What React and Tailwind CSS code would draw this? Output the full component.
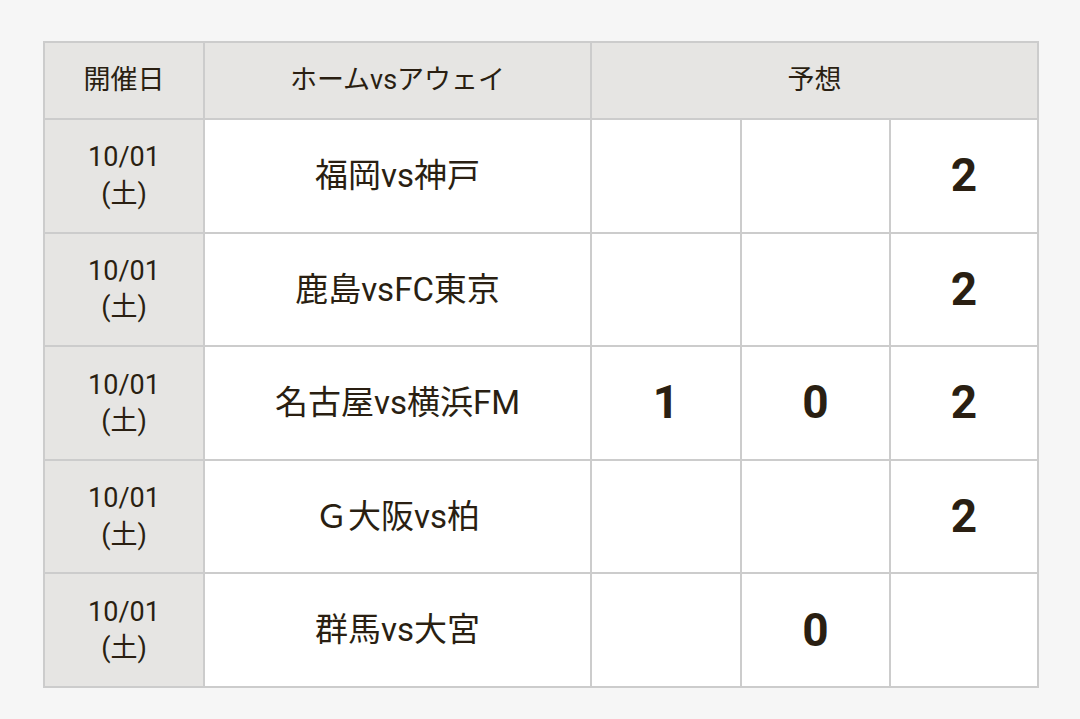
import React from 'react';

const rows = [
    { date: '10/01', day: '(土)', match: '福岡vs神戸', picks: ['', '', '2'] },
    { date: '10/01', day: '(土)', match: '鹿島vsFC東京', picks: ['', '', '2'] },
    { date: '10/01', day: '(土)', match: '名古屋vs横浜FM', picks: ['1', '0', '2'] },
    { date: '10/01', day: '(土)', match: 'Ｇ大阪vs柏', picks: ['', '', '2'] },
    { date: '10/01', day: '(土)', match: '群馬vs大宮', picks: ['', '0', ''] },
];

const App = () => {
    return (
        <div
            className="min-h-[719px] bg-[#f6f6f6] pt-[41px] pl-[43px]"
            style={{ fontFamily: "Roboto, 'Noto Sans CJK JP', sans-serif" }}
        >
            <table className="table-fixed border-collapse w-[994px] text-[#2a1f12]">
                <colgroup>
                    <col className="w-[160px]" />
                    <col className="w-[387px]" />
                    <col className="w-[150px]" />
                    <col className="w-[149px]" />
                    <col className="w-[148px]" />
                </colgroup>
                <thead>
                    <tr className="h-[77px] bg-[#e6e5e3] text-[27px] leading-[1.4]">
                        <th className="border-2 border-[#cccccc] font-normal">開催日</th>
                        <th className="border-2 border-[#cccccc] font-normal">ホームvsアウェイ</th>
                        <th colSpan={3} className="border-2 border-[#cccccc] font-normal">予想</th>
                    </tr>
                </thead>
                <tbody>
                    {rows.map((r, i) => (
                        <tr key={i} className="h-[113.6px]">
                            <td className="border-2 border-[#cccccc] bg-[#e6e5e3] text-center text-[27px] leading-[1.35]">
                                <div>{r.date}</div>
                                <div>{r.day}</div>
                            </td>
                            <td className="border-2 border-[#cccccc] bg-white text-center text-[33px]">{r.match}</td>
                            {r.picks.map((p, j) => (
                                <td key={j} className="border-2 border-[#cccccc] bg-white text-center text-[46px] font-bold">
                                    {p}
                                </td>
                            ))}
                        </tr>
                    ))}
                </tbody>
            </table>
        </div>
    );
};

export default App;
